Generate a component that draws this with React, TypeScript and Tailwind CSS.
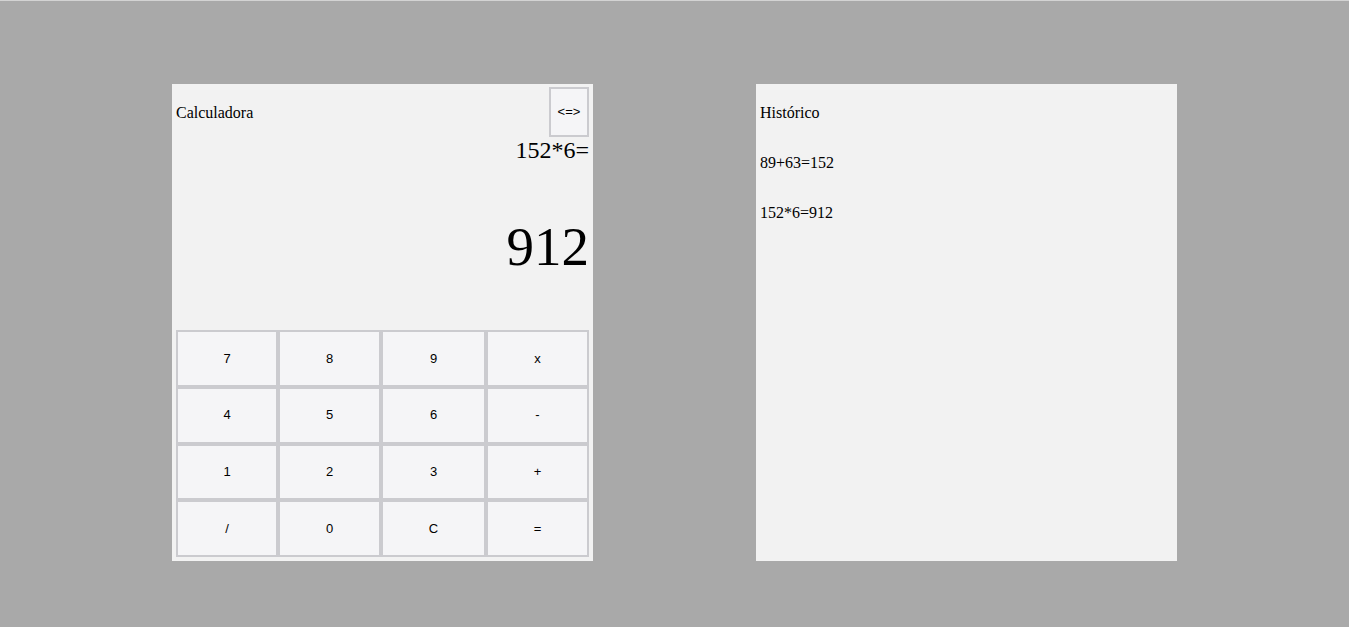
import React, { useState } from "react";

const keys = ["7", "8", "9", "x", "4", "5", "6", "-", "1", "2", "3", "+", "/", "0", "C", "="];

export default function App() {
  const [history] = useState<string[]>(["89+63=152", "152*6=912"]);
  const [expr] = useState("152*6=");
  const [result] = useState("912");

  return (
    <div className="min-h-screen w-full bg-[#a9a9a9] border-t border-[#d3d3d3] pt-[83px] pl-[172px] flex gap-[163px] font-['Liberation_Serif',serif] text-black">
      {/* Calculadora */}
      <div className="w-[421px] h-[477px] bg-[#f2f2f2] flex flex-col pt-[3px] px-[4px] pb-[4px]">
        <div className="flex items-center justify-between h-[50px]">
          <span className="text-[16px] pt-[2px]">Calculadora</span>
          <button className="w-[40px] h-[50px] border-2 border-[#cbcbcf] bg-[#f5f5f7] text-[13px] font-['Liberation_Sans',Arial,sans-serif]">
            &lt;=&gt;
          </button>
        </div>
        <div className="text-right text-[24px] leading-[1.15]">{expr}</div>
        <div className="text-right text-[55px] leading-[1.15] mt-[50px]">{result}</div>
        <div className="mt-auto h-[227px] grid grid-cols-[102px_103px_105px_103px] grid-rows-4">
          {keys.map((k) => (
            <button
              key={k}
              className="border-2 border-[#cbcbcf] bg-[#f5f5f7] text-[13px] font-['Liberation_Sans',Arial,sans-serif] text-black"
            >
              {k}
            </button>
          ))}
        </div>
      </div>

      {/* Histórico */}
      <div className="w-[421px] h-[477px] bg-[#f2f2f2] flex flex-col pt-[4px] px-[4px] pb-[4px]">
        <div className="flex items-center h-[50px] text-[16px]">Histórico</div>
        {history.map((h) => (
          <div key={h} className="flex items-center h-[50px] text-[16px]">
            {h}
          </div>
        ))}
      </div>
    </div>
  );
}
